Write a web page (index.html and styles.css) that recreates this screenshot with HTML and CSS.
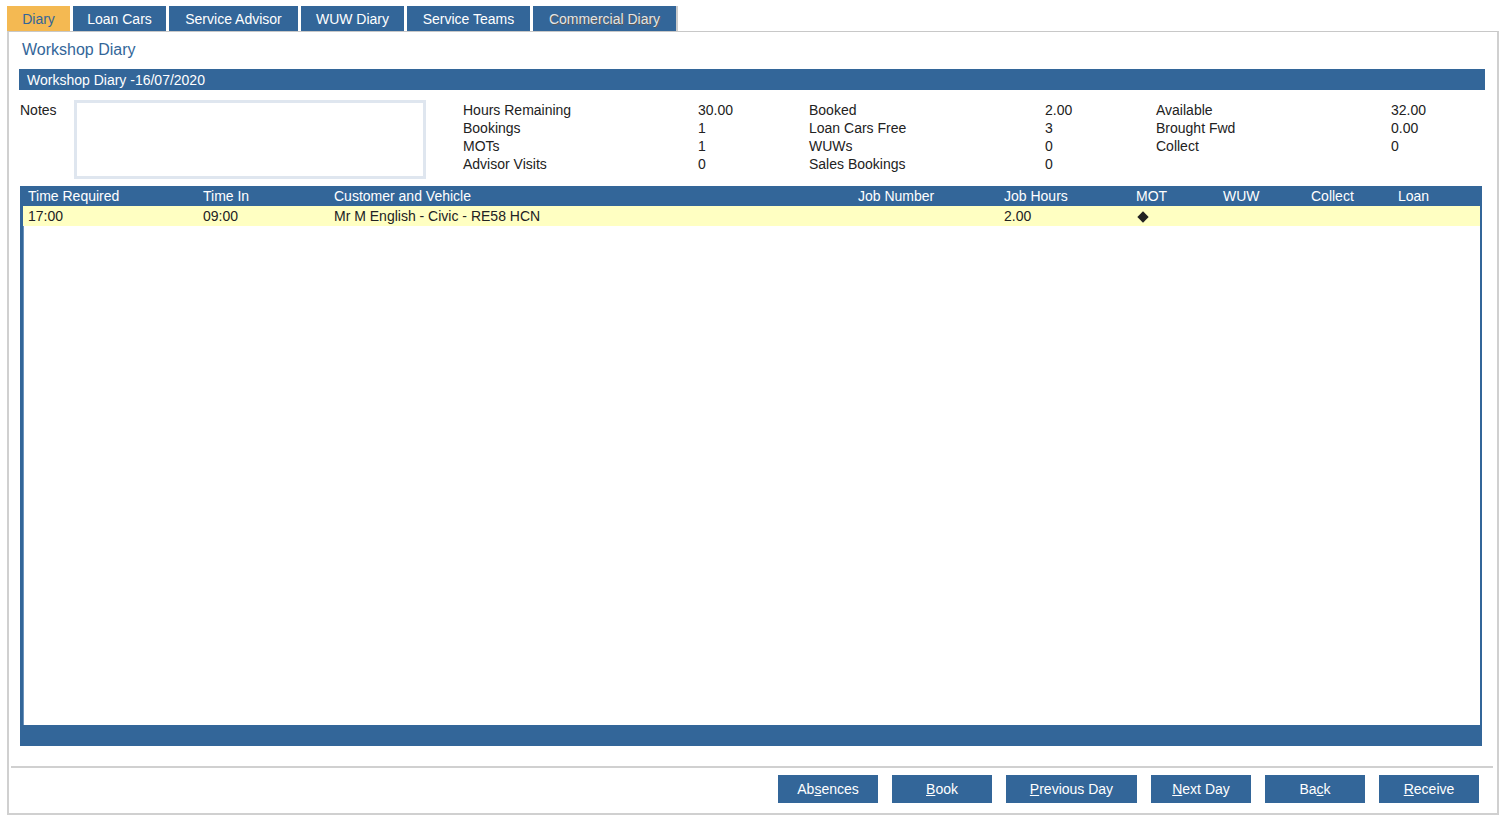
FILE: index.html
```html
<!DOCTYPE html>
<html lang="en">
<head>
    <meta charset="UTF-8">
    <title>Workshop Diary</title>
    <link rel="stylesheet" href="styles.css">
</head>
<body>
    <nav class="tabs">
        <a class="tab active">Diary</a>
        <a class="tab w-loan">Loan Cars</a>
        <a class="tab w-adv">Service Advisor</a>
        <a class="tab w-wuw">WUW Diary</a>
        <a class="tab w-teams">Service Teams</a>
        <a class="tab w-comm disabled">Commercial Diary</a>
    </nav>
    <div class="panel">
        <h1 class="title">Workshop Diary</h1>
        <div class="bar">Workshop Diary -16/07/2020</div>

        <div class="summary">
            <label class="notes-label" for="notes">Notes</label>
            <textarea id="notes" class="notes"></textarea>
            <div class="stats">
                <span>Hours Remaining</span><span>30.00</span>
                <span>Booked</span><span>2.00</span>
                <span>Available</span><span>32.00</span>

                <span>Bookings</span><span>1</span>
                <span>Loan Cars Free</span><span>3</span>
                <span>Brought Fwd</span><span>0.00</span>

                <span>MOTs</span><span>1</span>
                <span>WUWs</span><span>0</span>
                <span>Collect</span><span>0</span>

                <span>Advisor Visits</span><span>0</span>
                <span>Sales Bookings</span><span>0</span>
                <span></span><span></span>
            </div>
        </div>

        <div class="grid">
            <table>
                <colgroup>
                    <col style="width:175px">
                    <col style="width:131px">
                    <col style="width:524px">
                    <col style="width:146px">
                    <col style="width:132px">
                    <col style="width:87px">
                    <col style="width:88px">
                    <col style="width:87px">
                    <col>
                </colgroup>
                <thead>
                    <tr>
                        <th>Time Required</th>
                        <th>Time In</th>
                        <th>Customer and Vehicle</th>
                        <th>Job Number</th>
                        <th>Job Hours</th>
                        <th>MOT</th>
                        <th>WUW</th>
                        <th>Collect</th>
                        <th>Loan</th>
                    </tr>
                </thead>
                <tbody>
                    <tr class="selected">
                        <td>17:00</td>
                        <td>09:00</td>
                        <td>Mr M English - Civic - RE58 HCN</td>
                        <td></td>
                        <td>2.00</td>
                        <td><span class="diamond"></span></td>
                        <td></td>
                        <td></td>
                        <td></td>
                    </tr>
                </tbody>
            </table>
            <div class="grid-foot"></div>
        </div>

        <div class="actions">
            <button class="btn">Ab<u>s</u>ences</button>
            <button class="btn"><u>B</u>ook</button>
            <button class="btn wide"><u>P</u>revious Day</button>
            <button class="btn"><u>N</u>ext Day</button>
            <button class="btn">Ba<u>c</u>k</button>
            <button class="btn"><u>R</u>eceive</button>
        </div>
    </div>
</body>
</html>
```

FILE: styles.css
```css
body {
    margin: 0;
    padding: 6px 0 0 7px;
    font-family: "Liberation Sans", Arial, sans-serif;
    font-size: 14px;
    color: #222;
    background-color: white;
    width: 1492px;
}

.tabs {
    display: flex;
    gap: 3px;
    height: 25px;
}

.tab {
    display: block;
    background-color: #336699;
    color: white;
    height: 25px;
    line-height: 26px;
    text-align: center;
    box-sizing: border-box;
}

.tab.active {
    background-color: #f4b952;
    color: #336699;
    width: 63px;
}

.w-loan { width: 93px; }
.w-adv { width: 129px; }
.w-wuw { width: 103px; }
.w-teams { width: 123px; }
.w-comm { width: 145px; border-right: 2px solid #ccc; }

.tab.disabled {
    color: #e4e4e4;
    text-shadow: 1px 1px 0 #5a5a5a;
}

.panel {
    height: 784px;
    border: 2px solid #d0d0d0;
    border-top: 1px solid #c8c8c8;
    box-sizing: border-box;
    padding: 0 12px 0 10px;
    display: flex;
    flex-direction: column;
}

.title {
    margin: 8px 0 0 3px;
    font-size: 16px;
    font-weight: normal;
    color: #336699;
    line-height: 20px;
}

.bar {
    margin-top: 9px;
    height: 21px;
    line-height: 22px;
    background-color: #336699;
    color: white;
    padding-left: 8px;
}

.summary {
    display: flex;
    align-items: flex-start;
    margin-top: 10px;
    height: 80px;
}

.notes-label {
    width: 54px;
    padding: 1px 0 0 1px;
    line-height: 18px;
}

.notes {
    width: 352px;
    height: 79px;
    box-sizing: border-box;
    border: 3px solid #dfe6ef;
    resize: none;
    margin: 0;
}

.stats {
    margin-left: 37px;
    padding-top: 1px;
    display: grid;
    grid-template-columns: 235px 111px 236px 111px 235px 80px;
    line-height: 18px;
}

.grid {
    margin: 6px 3px 0 1px;
    height: 560px;
    border-left: 3px solid #336699;
    border-right: 2px solid #336699;
    box-shadow: inset 1px 0 0 #6d93bb;
    display: flex;
    flex-direction: column;
}

table {
    width: 100%;
    border-collapse: collapse;
    table-layout: fixed;
}

th, td {
    padding: 1px 0 0 5px;
    text-align: left;
    font-weight: normal;
    white-space: nowrap;
    height: 19px;
    line-height: 19px;
}

thead {
    background-color: #336699;
    color: white;
}

tr.selected {
    background-color: #ffffc2;
}

.diamond {
    display: inline-block;
    width: 8px;
    height: 8px;
    background-color: #222;
    transform: rotate(45deg);
    margin-left: 3px;
    vertical-align: 0;
}

.grid-foot {
    margin-top: auto;
    height: 21px;
    background-color: #336699;
}

.actions {
    margin: 20px -8px 0 -8px;
    border-top: 2px solid #d0d0d0;
    padding: 7px 14px 0 0;
    display: flex;
    justify-content: flex-end;
    gap: 14px;
}

.btn {
    width: 100px;
    height: 28px;
    border: none;
    background-color: #336699;
    color: white;
    font-family: "Liberation Sans", Arial, sans-serif;
    font-size: 14px;
    cursor: pointer;
    padding: 0;
}

.btn.wide {
    width: 131px;
}
```
